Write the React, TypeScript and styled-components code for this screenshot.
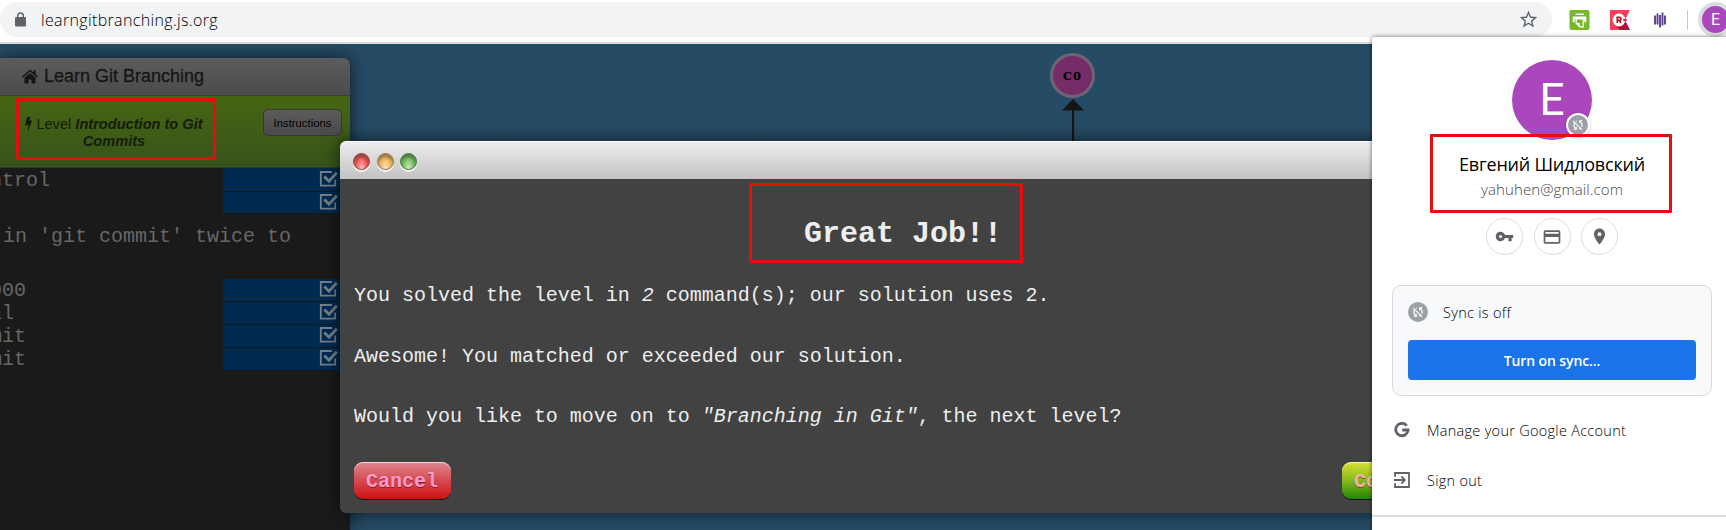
import React from 'react';
import styled, { createGlobalStyle, css } from 'styled-components';

const GlobalStyle = createGlobalStyle`
  * { box-sizing: border-box; }
  body { margin: 0; overflow: hidden; background: #fff; }
`;

const ui = `'Open Sans', 'Noto Sans', sans-serif`;
const mono = `'Liberation Mono', monospace`;

const Browser = styled.div`
  position: relative;
  display: flex;
  flex-direction: column;
  width: 1726px;
  height: 530px;
  overflow: hidden;
  font-family: ${ui};
`;

/* ---------- browser toolbar ---------- */
const Toolbar = styled.header`
  display: flex;
  align-items: flex-start;
  height: 44px;
  padding-top: 2px;
  background: #fff;
  border-bottom: 2px solid #dadce0;
`;
const AddressBar = styled.div`
  display: flex;
  flex: none;
  align-items: center;
  width: 1552px;
  height: 35px;
  padding: 0 13px 0 15px;
  border-radius: 18px;
  background: #f1f3f4;
`;
const Url = styled.span`
  flex: 1;
  margin-left: 15px;
  font-size: 16px;
  font-weight: 300;
  letter-spacing: 0.35px;
  color: #000;
`;
const Extensions = styled.div`
  display: flex;
  flex: none;
  align-items: center;
  height: 35px;
  margin-left: 17px;
`;
const Extension = styled.span<{ $gap: number }>`
  display: flex;
  margin-right: ${(p) => p.$gap}px;
`;
const Separator = styled.i`
  width: 1px;
  height: 20px;
  margin-right: 10px;
  background: #c6c8cb;
`;
const ProfileButton = styled.div`
  display: flex;
  flex: none;
  align-items: center;
  justify-content: center;
  width: 35px;
  height: 35px;
  border: 4px solid #dadce0;
  border-radius: 50%;
  background: #ab47bc;
  color: #fff;
  font: 16px Roboto, sans-serif;
`;

/* ---------- page ---------- */
const Page = styled.main`
  position: relative;
  display: flex;
  flex: 1;
  align-items: stretch;
  background: #264b64;
`;
const Terminal = styled.section`
  display: flex;
  flex-direction: column;
  width: 350px;
  margin-top: 14px;
  border-radius: 0 7px 0 0;
  background: #1a1a1a;
  box-shadow: 0 0 16px rgba(0, 0, 0, 0.65);
  overflow: hidden;
`;
const TerminalTitle = styled.div`
  display: flex;
  align-items: center;
  height: 38px;
  padding-left: 22px;
  gap: 6px;
  border-bottom: 1px solid #3b3b3b;
  background: linear-gradient(#5d5c5d, #4b4b4b);
  color: #151515;
  font: 18px 'Liberation Sans', sans-serif;
  -webkit-text-stroke: 0.3px #151515;
`;
const LevelBar = styled.div`
  display: flex;
  align-items: flex-start;
  height: 72px;
  padding: 13px 8px 0 19px;
  border-bottom: 1px solid #2a3f13;
  background: linear-gradient(#466612, #38531b);
`;
const LevelName = styled.div`
  width: 190px;
  padding-top: 7px;
  text-align: center;
  color: #161b0b;
  font: 14.6px/17px 'Liberation Sans', sans-serif;
  white-space: nowrap;
  svg { vertical-align: -3px; margin-right: 4px; }
`;
const Instructions = styled.button`
  width: 79px;
  height: 27px;
  margin-left: auto;
  padding: 0;
  border: 1px solid #373737;
  border-radius: 5px;
  background: linear-gradient(#5c5c5c, #4a4a4a);
  color: #000;
  font: 11.3px 'Liberation Sans', sans-serif;
`;
const Line = styled.div<{ $h?: number; $indent?: number }>`
  display: flex;
  align-items: center;
  flex: none;
  height: ${(p) => p.$h ?? 23}px;
  color: #676767;
  font: 20px ${mono};
  text-indent: ${(p) => p.$indent ?? -10}px;
  white-space: pre;
`;
const Status = styled.span`
  display: flex;
  align-items: center;
  justify-content: flex-end;
  width: 127px;
  height: 100%;
  margin-left: auto;
  padding: 0 12px 2px 0;
  border-bottom: 1px solid #11191f;
  background: #002950;
`;
const Graph = styled.section`
  flex: 1;
  padding-left: 699px;
  padding-top: 9px;
`;
const Commit = styled.div`
  display: flex;
  flex-direction: column;
  align-items: center;
  width: 47px;
`;
const CommitDot = styled.div`
  display: flex;
  align-items: center;
  justify-content: center;
  width: 45px;
  height: 45px;
  border: 3px solid #6e6476;
  border-radius: 50%;
  background: #762c66;
  color: #000;
  font: bold 11.5px 'DejaVu Serif', serif;
  letter-spacing: 0.8px;
`;

/* ---------- level-complete dialog ---------- */
const Dialog = styled.section`
  position: absolute;
  left: 340px;
  top: 97px;
  width: 1040px;
  height: 372px;
  border-radius: 6px;
  background: #424242;
  box-shadow: 0 0 16px rgba(0, 0, 0, 0.65);
  overflow: hidden;
  color: #eee;
  font: 20px ${mono};
`;
const DialogTitle = styled.div`
  display: flex;
  align-items: center;
  gap: 6.5px;
  height: 38px;
  padding: 1px 0 0 13px;
  border-top: 1px solid #fff;
  background: linear-gradient(#eeecee, #c3c3c3);
`;
const Light = styled.i<{ $c: string; $edge: string }>`
  width: 17px;
  height: 17px;
  border-radius: 50%;
  background: radial-gradient(ellipse at 50% 95%, rgba(255, 255, 255, 0.65), rgba(255, 255, 255, 0) 55%), ${(p) => p.$c};
  border: 1px solid ${(p) => p.$edge};
  box-shadow: 0 2px 0 #f5f5f5, inset 0 3px 3px ${(p) => p.$edge};
`;
const DialogBody = styled.div`
  display: flex;
  flex-direction: column;
  padding: 37px 0 0 14px;
`;
const Heading = styled.h2`
  margin: 0 0 0 450px;
  height: 36px;
  font: bold 30px/36px ${mono};
`;
const Paragraph = styled.p<{ $top: number }>`
  margin: ${(p) => p.$top}px 0 0;
  font: 20px/24px ${mono};
  letter-spacing: -0.01px;
  white-space: pre;
`;
const Actions = styled.div`
  display: flex;
  gap: 891px;
  margin-top: 33px;
`;
const Action = styled.button<{ $kind: 'cancel' | 'confirm' }>`
  flex: none;
  height: 37px;
  padding: 2px 12px 0;
  border: 0;
  border-radius: 9px;
  font: bold 20px ${mono};
  text-align: left;
  box-shadow: 0 1px 0 #111, inset 0 1px 0 rgba(255, 255, 255, 0.65);
  ${(p) => p.$kind === 'cancel'
    ? css`width: 97px; background: linear-gradient(#de8890, #d54a50 50%, #cc1013); color: #ff9ccb; text-shadow: 0 1px 0 #802030;`
    : css`width: 109px; background: linear-gradient(#d8e231, #86b91f 50%, #218403); color: #f7b3a4; text-shadow: 0 1px 0 #5d5a2a;`}
`;

/* ---------- account menu ---------- */
const AccountMenu = styled.aside`
  position: absolute;
  left: 1372px;
  top: 37px;
  display: flex;
  flex-direction: column;
  align-items: center;
  width: 360px;
  height: 500px;
  padding-top: 23px;
  border-radius: 3px 0 0 0;
  background: #fff;
  box-shadow: 0 0 4px rgba(0, 0, 0, 0.55);
  color: #000;
`;
const Avatar = styled.div`
  position: relative;
  display: flex;
  flex: none;
  align-items: center;
  justify-content: center;
  width: 80px;
  height: 80px;
  border-radius: 50%;
  background: #ab47bc;
  color: #fff;
  font: 44px Roboto, sans-serif;
`;
const SyncBadge = styled.span<{ $overlay?: boolean }>`
  display: flex;
  align-items: center;
  justify-content: center;
  width: 20px;
  height: 20px;
  border-radius: 50%;
  background: #9aa0a6;
  ${(p) => p.$overlay && css`
    position: absolute;
    right: 4px;
    bottom: 5px;
    box-shadow: 0 0 0 2px #fff, 0 1px 3px 2px rgba(0, 0, 0, 0.25);
  `}
`;
const Name = styled.div`
  margin-top: 12px;
  font-size: 18px;
  line-height: 24px;
  letter-spacing: -0.22px;
  white-space: nowrap;
`;
const Email = styled.div`
  margin-top: 3px;
  color: #44474b;
  font-size: 15px;
  font-weight: 300;
  line-height: 20px;
  letter-spacing: 0.1px;
`;
const Shortcuts = styled.div`
  display: flex;
  gap: 10.5px;
  margin-top: 19px;
`;
const Shortcut = styled.span`
  display: flex;
  align-items: center;
  justify-content: center;
  width: 37px;
  height: 37px;
  border: 1px solid #dadce0;
  border-radius: 50%;
`;
const SyncCard = styled.div`
  width: 320px;
  height: 111px;
  margin-top: 30px;
  padding: 16px 15px;
  border: 1px solid #dadce0;
  border-radius: 9px;
  background: #f8f9fb;
`;
const SyncRow = styled.div`
  display: flex;
  align-items: center;
  gap: 15px;
  height: 20px;
  font-size: 14.5px;
  font-weight: 300;
  letter-spacing: 0.3px;
`;
const SyncButton = styled.button`
  width: 288px;
  height: 40px;
  margin-top: 18px;
  padding: 0;
  border: 0;
  border-radius: 4px;
  background: #1a73e8;
  color: #fff;
  font: 600 14px ${ui};
  letter-spacing: -0.1px;
`;
const MenuItem = styled.div`
  display: flex;
  align-items: center;
  gap: 17px;
  align-self: stretch;
  height: 50px;
  padding-left: 22px;
  font-size: 14.5px;
  font-weight: 300;
  letter-spacing: 0.28px;
`;
const MenuList = styled.div`
  align-self: stretch;
  padding: 9px 0 10px;
  border-bottom: 2px solid #dadce0;
`;

/* ---------- red annotation frames ---------- */
const Frame = styled.div<{ $x: number; $y: number; $w: number; $h: number }>`
  position: absolute;
  left: ${(p) => p.$x}px;
  top: ${(p) => p.$y}px;
  width: ${(p) => p.$w}px;
  height: ${(p) => p.$h}px;
  border: 3px solid #e60d10;
  border-radius: 1px;
`;

const SyncOff = () => (
  <svg width="14" height="14" viewBox="0 0 24 24" fill="#fff">
    <path d="M10 6.35V4.26c-.8.21-1.55.54-2.23.96l1.46 1.46c.25-.12.5-.24.77-.33zm-7.14-.94 2.36 2.36C4.45 8.99 4 10.44 4 12c0 2.21.91 4.2 2.36 5.64L4 20h6v-6l-2.24 2.24C6.68 15.15 6 13.66 6 12c0-1 .25-1.94.68-2.77l8.08 8.08c-.25.13-.5.25-.77.34v2.09c.8-.21 1.55-.54 2.23-.96l2.36 2.36 1.27-1.27L4.14 4.14 2.86 5.41zM20 4h-6v6l2.24-2.24C17.32 8.85 18 10.34 18 12c0 1-.25 1.94-.68 2.77l1.46 1.46C19.55 15.01 20 13.56 20 12c0-2.21-.91-4.2-2.36-5.64L20 4z" />
  </svg>
);
const Check = () => (
  <svg width="19" height="16" viewBox="0 0 19 16" fill="none" stroke="#73808b" strokeWidth="1.8">
    <path d="M13 1H1.8v13.6h14.4V8.5" />
    <path d="M5.3 5.5l4.7 4.7 7.8-8.5" strokeWidth="2.8" />
  </svg>
);

const App = () => (
  <Browser>
    <GlobalStyle />
    <Toolbar>
      <AddressBar>
        <svg width="11" height="15" viewBox="0 0 11 15">
          <path d="M2.7 6V3.8a2.8 2.8 0 0 1 5.6 0V6" fill="none" stroke="#5f6368" strokeWidth="1.5" />
          <rect y="5" width="11" height="9.5" rx="1.2" fill="#5f6368" />
        </svg>
        <Url>learngitbranching.js.org</Url>
        <svg width="21" height="21" viewBox="0 0 24 24" fill="#5f6368">
          <path d="M22 9.24l-7.19-.62L12 2 9.19 8.63 2 9.24l5.46 4.73L5.82 21 12 17.27 18.18 21l-1.63-7.03L22 9.24zM12 15.4l-3.76 2.27 1-4.28-3.32-2.88 4.38-.38L12 6.1l1.71 4.04 4.38.38-3.32 2.88 1 4.28L12 15.4z" />
        </svg>
      </AddressBar>
      <Extensions>
        <Extension $gap={20}>
          <svg width="21" height="20" viewBox="0 0 20 20">
            <rect width="20" height="20" rx="2" fill="#76b82a" />
            <path d="M6 3.4h8.5v1.6H6zM3.2 6.4h13.6v5.8h-2V9.4H5.2v2.8h-2z" fill="#fff" />
            <path d="M6.7 9.4v3.8l3.6 3.7h3.4V9.4" fill="none" stroke="#fff" strokeWidth="1.3" />
            <path d="M6.5 13h3.8v4z" fill="#fff" />
          </svg>
        </Extension>
        <Extension $gap={24}>
          <svg width="20" height="20" viewBox="0 0 20 20">
            <path d="M0 0h20l-5 10 5 10H0z" fill="#f53e5c" />
            <path d="M5 15l5 5h10l-5-9z" fill="#a91536" />
            <circle cx="9" cy="10" r="5.4" fill="#fff" stroke="#fff" strokeWidth="2" />
            <path d="M12.5 8.8h4v2.4h-4z" fill="#d51f3c" />
            <circle cx="9" cy="10" r="4.4" fill="#fff" />
            <path d="M7.3 13V7.4h2.2a1.5 1.5 0 0 1 0 3H7.3m2.1 0l1.6 2.6" fill="none" stroke="#b3122f" strokeWidth="1.7" />
          </svg>
        </Extension>
        <Extension $gap={21}>
          <svg width="12" height="16" viewBox="0 0 12 16" stroke="#5b3f92" strokeWidth="1.9">
            <path d="M1 3.5v9M3.5 1.5v11M6 3v12.5M8.5.5v13M11 3.5v9" />
          </svg>
        </Extension>
        <Separator />
        <ProfileButton>E</ProfileButton>
      </Extensions>
    </Toolbar>

    <Page>
      <Terminal>
        <TerminalTitle>
          <svg width="16" height="15" viewBox="0 0 16 15" fill="#151515">
            <path d="M8 .5L0 7.6l1 1.1 7-6.1 7 6.1 1-1.1-2.3-2V1.2h-2.2v2.4z" />
            <path d="M8 4L2.5 8.8V14.5h4v-4h3v4h4V8.8z" />
          </svg>
          Learn Git Branching
        </TerminalTitle>
        <LevelBar>
          <LevelName>
            <svg width="7" height="15" viewBox="0 0 7 15" fill="#11160a">
              <path d="M2 0h3.5L4 4l3-.8L2.8 15l.8-7.4L.2 8.5z" />
            </svg>
            Level <b><i>Introduction to Git<br />Commits</i></b>
          </LevelName>
          <Instructions>Instructions</Instructions>
        </LevelBar>
        <Line $h={24}>ntrol<Status><Check /></Status></Line>
        <Line $h={22}><Status><Check /></Status></Line>
        <Line $h={45} $indent={3}>in 'git commit' twice to</Line>
        <Line $h={20} />
        <Line>000<Status><Check /></Status></Line>
        <Line>al<Status><Check /></Status></Line>
        <Line>mit<Status><Check /></Status></Line>
        <Line>mit<Status><Check /></Status></Line>
      </Terminal>
      <Graph>
        <Commit>
          <CommitDot>C0</CommitDot>
          <svg width="24" height="60" viewBox="0 0 24 60" fill="#151515">
            <path d="M12 1l11 11.5H1zM11 12h2.2v48H11z" />
          </svg>
        </Commit>
      </Graph>
      <Dialog>
        <DialogTitle>
          <Light $c="#f2514f" $edge="#8d4747" />
          <Light $c="#f0b457" $edge="#8f764f" />
          <Light $c="#6fbd5b" $edge="#4d7543" />
        </DialogTitle>
        <DialogBody>
          <Heading>Great Job!!</Heading>
          <Paragraph $top={32}>You solved the level in <i>2</i> command(s); our solution uses 2.</Paragraph>
          <Paragraph $top={37}>Awesome! You matched or exceeded our solution.</Paragraph>
          <Paragraph $top={36}>Would you like to move on to <i>"Branching in Git"</i>, the next level?</Paragraph>
          <Actions>
            <Action $kind="cancel">Cancel</Action>
            <Action $kind="confirm">Co</Action>
          </Actions>
        </DialogBody>
      </Dialog>
    </Page>

    <AccountMenu>
      <Avatar>E<SyncBadge $overlay><SyncOff /></SyncBadge></Avatar>
      <Name>Евгений Шидловский</Name>
      <Email>yahuhen@gmail.com</Email>
      <Shortcuts>
        <Shortcut>
          <svg width="19" height="19" viewBox="0 0 24 24" fill="#5f6368">
            <path d="M12.65 10C11.83 7.67 9.61 6 7 6c-3.31 0-6 2.69-6 6s2.69 6 6 6c2.61 0 4.83-1.67 5.65-4H17v4h4v-4h2v-4H12.65zM7 14c-1.1 0-2-.9-2-2s.9-2 2-2 2 .9 2 2-.9 2-2 2z" />
          </svg>
        </Shortcut>
        <Shortcut>
          <svg width="20" height="20" viewBox="0 0 24 24" fill="#5f6368">
            <path d="M20 4H4c-1.11 0-1.99.89-1.99 2L2 18c0 1.11.89 2 2 2h16c1.11 0 2-.89 2-2V6c0-1.11-.89-2-2-2zm0 14H4v-6h16v6zm0-10H4V6h16v2z" />
          </svg>
        </Shortcut>
        <Shortcut>
          <svg width="19" height="19" viewBox="0 0 24 24" fill="#5f6368">
            <path d="M12 2C8.13 2 5 5.13 5 9c0 5.25 7 13 7 13s7-7.75 7-13c0-3.87-3.13-7-7-7zm0 9.5c-1.38 0-2.5-1.12-2.5-2.5s1.12-2.5 2.5-2.5 2.5 1.12 2.5 2.5-1.12 2.5-2.5 2.5z" />
          </svg>
        </Shortcut>
      </Shortcuts>
      <SyncCard>
        <SyncRow><SyncBadge><SyncOff /></SyncBadge>Sync is off</SyncRow>
        <SyncButton>Turn on sync...</SyncButton>
      </SyncCard>
      <MenuList>
        <MenuItem>
          <svg width="16" height="16" viewBox="0 0 16 16" fill="none" stroke="#5f6368" strokeWidth="2.8">
            <path d="M12.7 3.6A6.2 6.2 0 1 0 14.1 8H8.2" />
          </svg>
          Manage your Google Account
        </MenuItem>
        <MenuItem>
          <svg width="16" height="16" viewBox="0 0 16 16" fill="none" stroke="#5f6368" strokeWidth="1.8">
            <path d="M1 4.8V1h14v14H1v-3.8M0 8h10.5M7.3 4.4L10.9 8l-3.6 3.6" />
          </svg>
          Sign out
        </MenuItem>
      </MenuList>
    </AccountMenu>

    <Frame $x={16} $y={98} $w={200} $h={62} />
    <Frame $x={749} $y={183} $w={274} $h={80} />
    <Frame $x={1430} $y={134} $w={242} $h={79} />
  </Browser>
);

export default App;
